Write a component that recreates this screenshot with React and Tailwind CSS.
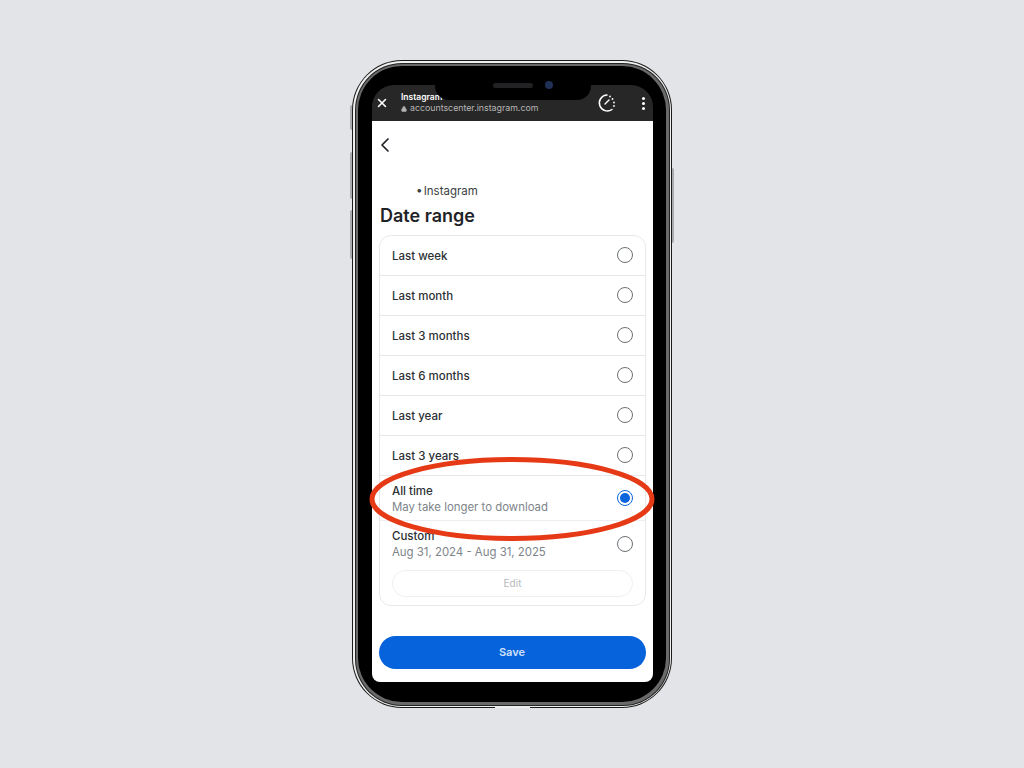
import React from 'react';
import { X, ChevronLeft, Lock } from 'lucide-react';

const ranges = ['Last week', 'Last month', 'Last 3 months', 'Last 6 months', 'Last year', 'Last 3 years'];

function Radio({ checked }) {
  if (checked) {
    return (
      <span className="flex h-4 w-4 shrink-0 items-center justify-center rounded-full border-[1.5px] border-[#0a66d8]">
        <span className="h-[10px] w-[10px] rounded-full bg-[#0a64dc]" />
      </span>
    );
  }
  return <span className="h-4 w-4 shrink-0 rounded-full border-[1.5px] border-[#6b7074]" />;
}

function SimpleRow({ label }) {
  return (
    <div className="flex h-10 items-center justify-between border-b border-[#e6e8ea] pl-3 pr-3">
      <span className="mt-[2px] text-[11.5px] font-medium text-[#2b3034]">{label}</span>
      <span className="mb-[1px] flex">
        <Radio />
      </span>
    </div>
  );
}

function Phone() {
  return (
    <div className="relative h-[648px] w-[320px]">
      {/* side buttons */}
      <div className="absolute left-[-2px] top-[45px] h-[25px] w-[2px] rounded-l-sm bg-[#a9abae]" />
      <div className="absolute left-[-2px] top-[92px] h-[47px] w-[2px] rounded-l-sm bg-[#a9abae]" />
      <div className="absolute left-[-2px] top-[150px] h-[49px] w-[2px] rounded-l-sm bg-[#a9abae]" />
      <div className="absolute right-[-2px] top-[108px] h-[75px] w-[2px] rounded-r-sm bg-[#a9abae]" />
      {/* bottom antenna band */}
      <div className="absolute bottom-0 left-[143px] z-10 h-[2px] w-[35px] bg-[#eeeeee]" />

      <div className="h-full rounded-[50px] bg-[#1b1b1b] p-[1px]">
        <div className="h-full rounded-[49px] bg-[#f0f0f0] p-[1.5px]">
          <div className="h-full rounded-[47px] bg-[#222222] p-[1px]">
            <div className="h-full rounded-[46px] bg-[#6a6a6a] p-[2.5px]">
              <div className="relative flex h-full flex-col overflow-hidden rounded-[44px] bg-black pb-[20px] pl-[14px] pr-[13px] pt-[19px]">
                {/* notch */}
                <div className="absolute left-[77px] top-0 z-10 flex h-[34px] w-[156px] items-center justify-center gap-[12px] rounded-b-[14px] bg-black pl-[19px] pt-[4px]">
                  <span className="h-[5px] w-[40px] rounded-full bg-[#222224]" />
                  <span className="h-[8px] w-[8px] rounded-full bg-[#1f2f55]" />
                </div>

                <div className="flex h-[36px] shrink-0 items-center rounded-t-[22px] bg-[#272727] pl-[1px] pr-[8px] text-white">
                  <X size={14} strokeWidth={2.6} className="mx-[2px]" />
                  <div className="ml-[10px] flex flex-col font-['Inter',sans-serif] leading-none">
                    <span className="text-[8.5px] font-semibold">Instagram</span>
                    <span className="mt-[3px] flex items-center gap-[3px] text-[8.8px] text-[#b5b5b5]">
                      <Lock size={6} fill="#b5b5b5" />
                      accountscenter.instagram.com
                    </span>
                  </div>
                  <svg viewBox="0 0 20 20" className="ml-auto mr-[26px] h-[20px] w-[20px]" fill="none" stroke="#fff" strokeLinecap="round">
                    <path d="M11 2a8 8 0 1 0 5 14.5" strokeWidth="1.5" />
                    <path d="M14 3.5v0M16.5 6v0M18 9.5v0M18 13v0" strokeWidth="1.8" />
                    <path d="M9 11l4-4" strokeWidth="1.4" />
                  </svg>
                  <span className="flex flex-col gap-[2px]">
                    <span className="h-[3px] w-[3px] rounded-full bg-white" />
                    <span className="h-[3px] w-[3px] rounded-full bg-white" />
                    <span className="h-[3px] w-[3px] rounded-full bg-white" />
                  </span>
                </div>

                <div className="flex min-h-0 flex-1 flex-col rounded-b-[8px] bg-white px-[7px] font-['Inter',sans-serif] text-[#1f2327]">
                  <ChevronLeft size={24} strokeWidth={1.7} className="ml-[-6px] mt-[12px] shrink-0" />
                  <p className="ml-[37px] mt-[26px] text-[11.5px] leading-[16px] text-[#3a3f44] [word-spacing:-2px]">• Instagram</p>
                  <h1 className="ml-[1px] mt-[5px] text-[18px] font-semibold leading-[24px]">Date range</h1>

                  <div className="mt-[7px] h-[371px] shrink-0 rounded-[12px] border border-[#e6e8ea]">
                    {ranges.map((r) => (
                      <SimpleRow key={r} label={r} />
                    ))}
                    <div className="flex h-[45px] items-center justify-between border-b border-[#eceef0] px-3">
                      <div className="mt-[1px] flex flex-col">
                        <span className="text-[11.5px] font-medium leading-[16px] text-[#2b3034]">All time</span>
                        <span className="text-[11.4px] leading-[16px] text-[#7d848a]">May take longer to download</span>
                      </div>
                      <Radio checked />
                    </div>
                    <div className="flex items-center justify-between px-3 pt-[7px]">
                      <div className="flex flex-col">
                        <span className="text-[11.5px] font-medium leading-[16px] text-[#2b3034]">Custom</span>
                        <span className="text-[11.4px] leading-[16px] text-[#7d848a]">Aug 31, 2024 - Aug 31, 2025</span>
                      </div>
                      <Radio />
                    </div>
                    <div className="mx-3 mt-[10px] flex h-[27px] items-center justify-center rounded-full border border-[#eceef0] text-[10px] text-[#b4b8bc]">
                      Edit
                    </div>
                  </div>

                  <button className="mt-[30px] flex h-[33px] shrink-0 items-center justify-center rounded-full bg-[#0763dc] pr-[1px] text-[11px] font-semibold text-[#cfe0f7]">
                    Save
                  </button>
                </div>
              </div>
            </div>
          </div>
        </div>
      </div>

      {/* red marker circled around the "All time" row */}
      <svg viewBox="0 0 300 100" className="absolute left-[13px] top-[389px] z-20 h-[100px] w-[300px]" fill="none">
        <ellipse cx="147" cy="50" rx="140" ry="39.5" stroke="#e63a17" strokeWidth="5" />
      </svg>
    </div>
  );
}

export default function App() {
  return (
    <div className="flex h-[768px] w-[1024px] items-start justify-center bg-[#e2e4e8] pt-[60px]">
      <Phone />
    </div>
  );
}
